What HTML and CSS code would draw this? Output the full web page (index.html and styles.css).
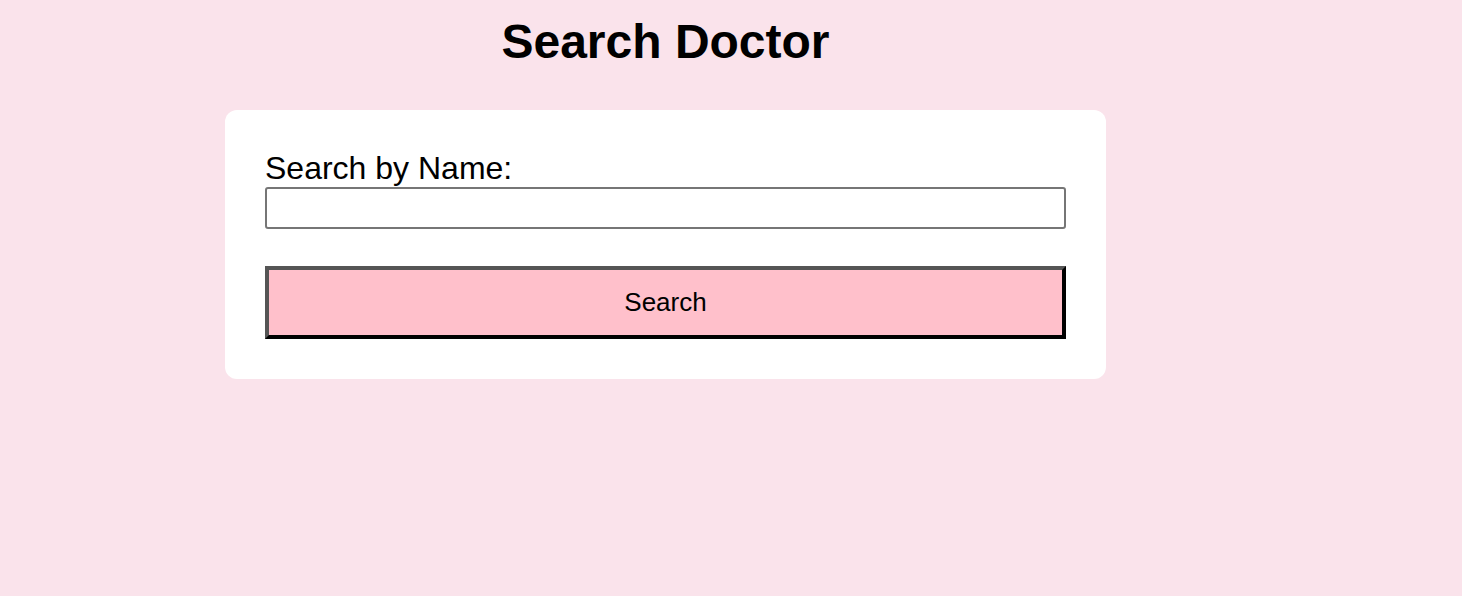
FILE: index.html
```html
<!DOCTYPE html>
<html lang="en">
<head>
<meta charset="utf-8">
<title>Search Doctor</title>
<link rel="stylesheet" href="styles.css">
</head>
<body>
<main class="page">
  <h1 class="title">Search Doctor</h1>
  <form class="card">
    <label class="label" for="name">Search by Name:</label>
    <input class="field" id="name" type="text">
    <button class="btn" type="button">Search</button>
  </form>
</main>
</body>
</html>
```

FILE: styles.css
```css
html, body {
  margin: 0;
  padding: 0;
}
body {
  background: #fae3eb;
  font-family: "Liberation Sans", Arial, sans-serif;
  color: #000;
  width: 1462px;
  height: 596px;
}
.page {
  width: 881px;
  margin-left: 225px;
  padding-top: 15px;
}
.title {
  margin: 0 0 41px 0;
  font-size: 48px;
  font-weight: bold;
  line-height: 54px;
  text-align: center;
}
.card {
  background: #fff;
  border-radius: 12px;
  padding: 40px;
  display: flex;
  flex-direction: column;
}
.label {
  font-size: 32px;
  line-height: 37px;
  display: block;
}
.field {
  box-sizing: border-box;
  height: 42px;
  width: 100%;
  margin: 0;
  border: 2px solid #767676;
  border-radius: 3px;
  background: #fff;
  font-family: inherit;
  font-size: 24px;
  padding: 0 6px;
}
.btn {
  box-sizing: border-box;
  margin-top: 37px;
  height: 73px;
  width: 100%;
  background: #ffc0cb;
  border-style: solid;
  border-width: 4px;
  border-color: #555 #000 #000 #555;
  font-family: inherit;
  font-size: 26px;
  color: #000;
  padding: 0;
}
```
